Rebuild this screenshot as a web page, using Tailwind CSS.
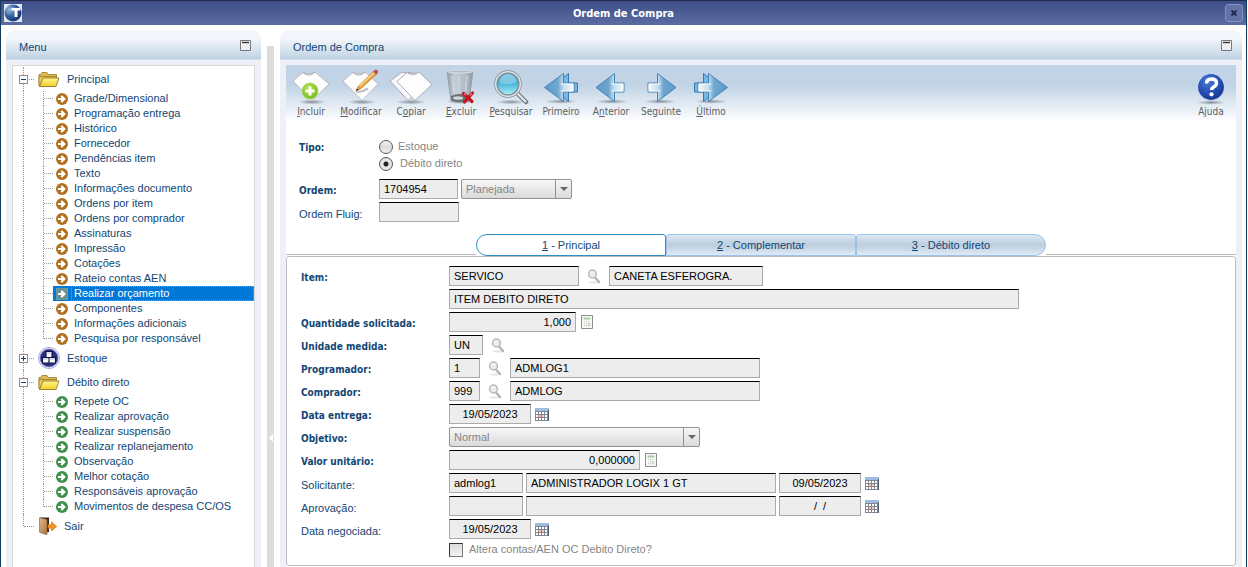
<!DOCTYPE html>
<html lang="pt-BR">
<head>
    <meta charset="UTF-8">
    <meta name="viewport" content="width=device-width, initial-scale=1.0">
    <title>Ordem de Compra</title>
    <script src="https://cdn.jsdelivr.net/npm/@tailwindcss/browser@4"></script>
</head>
<body class="min-h-screen bg-white pr-px font-['Liberation_Sans',Arial,sans-serif] text-[11px] leading-[15px] text-[#124674]">
    <!-- Shared gradients and small icons -->
    <svg class="absolute w-0 h-0" aria-hidden="true">
        <defs>
            <linearGradient id="g-arrow" x1="0" x2="1" y1="0" y2="0">
                <stop offset="0" stop-color="#5b9bcd"/><stop offset=".45" stop-color="#6fa6cf"/><stop offset=".65" stop-color="#c5dff0"/><stop offset="1" stop-color="#f8fcff"/>
            </linearGradient>
            <linearGradient id="g-folder" x1="0" x2="0" y1="0" y2="1">
                <stop offset="0" stop-color="#fff58e"/><stop offset="1" stop-color="#f2cf2a"/>
            </linearGradient>
            <linearGradient id="g-glass" x1="0" x2="0" y1="0" y2="1">
                <stop offset="0" stop-color="#5fb4d8"/><stop offset=".45" stop-color="#3fb3d8"/><stop offset="1" stop-color="#b5f3fb"/>
            </linearGradient>
            <linearGradient id="g-bin" x1="0" x2="1" y1="0" y2="0">
                <stop offset="0" stop-color="#8b959c"/><stop offset=".3" stop-color="#c4ced6"/><stop offset=".75" stop-color="#aab5bd"/><stop offset="1" stop-color="#858e95"/>
            </linearGradient>
            <linearGradient id="g-door" x1="0" x2="1" y1="0" y2="1">
                <stop offset="0" stop-color="#e0b988"/><stop offset="1" stop-color="#a8743e"/>
            </linearGradient>
            <radialGradient id="g-help" cx=".4" cy=".3" r=".8">
                <stop offset="0" stop-color="#4d78d6"/><stop offset=".6" stop-color="#2149ad"/><stop offset="1" stop-color="#142f80"/>
            </radialGradient>
            <radialGradient id="g-globe" cx=".3" cy=".3" r=".8">
                <stop offset="0" stop-color="#9dbbe0"/><stop offset=".5" stop-color="#335f9f"/><stop offset="1" stop-color="#0d2b63"/>
            </radialGradient>
            <radialGradient id="g-plus" cx=".4" cy=".3" r=".8">
                <stop offset="0" stop-color="#b5e552"/><stop offset="1" stop-color="#6fb81d"/>
            </radialGradient>
            <radialGradient id="g-shadow">
                <stop offset="0" stop-color="#4a5560" stop-opacity=".6"/><stop offset="1" stop-color="#4a5560" stop-opacity="0"/>
            </radialGradient>
        </defs>
        <symbol id="i-go" viewBox="0 0 12 12">
            <circle cx="6" cy="6" r="6" fill="currentColor"/>
            <path d="M2 5h3.600L4.600 3.600 6 2.300 9.900 6 6 9.700 4.600 8.400 5.600 7H2z" fill="#fff"/>
        </symbol>
        <symbol id="i-folder" viewBox="0 0 22 17">
            <path d="M1 14V3.500h2L4 1.500h5l1 2h8.500V7" fill="#dfb951" stroke="#9a7b2c" stroke-width=".8"/>
            <path d="M1 15V5.500l4 0h13.500v3l-3 6.500z" fill="#e9c85c" stroke="#9a7b2c" stroke-width=".8"/>
            <path d="M1.500 15.500l3.500-8.500h16l-3 8.500z" fill="url(#g-folder)" stroke="#8a6d20" stroke-width=".8"/>
        </symbol>
        <symbol id="i-stock" viewBox="0 0 22 22">
            <circle cx="11" cy="11" r="10.500" fill="#fff" stroke="#a3a5de"/>
            <circle cx="11" cy="11" r="9" fill="#2b2f86" stroke="#7578c4" stroke-width=".8"/>
            <path d="M8 4.500h6v6H8zM4.500 10.500h6.500v5.500h-6.500zM11 10.500h6.500v5.500H11z" fill="#fff" stroke="#101340" stroke-width="1.200"/>
            <path d="M8.600 6h4.800M5.200 12h5.200M11.700 12h5.200" stroke="#b4b6de" stroke-width=".9"/>
        </symbol>
        <symbol id="i-exit" viewBox="0 0 19 18">
            <path d="M0 15.500l7 2.300 5-2z" fill="#bbb"/>
            <path d="M2 .5h9v14.500h-9z" fill="#33261c"/>
            <path d="M1.500 .7l7.500 1.800v15l-7.500-2.500z" fill="url(#g-door)" stroke="#8a6136" stroke-width=".6"/>
            <path d="M10 7.700h3.500V4.800L18.700 9.500l-5.200 4.500v-2.800H10z" fill="#f39226" stroke="#c66b10" stroke-width=".6"/>
        </symbol>
        <symbol id="i-find" viewBox="0 0 14 15">
            <ellipse cx="7" cy="13.500" rx="6" ry="1.200" fill="#e6e6e6"/>
            <path d="M7.500 8l4.500 5" stroke="#b4b4b4" stroke-width="2.400" stroke-linecap="round"/>
            <circle cx="5.500" cy="5" r="3.900" fill="#ececec" stroke="#b9b9b9" stroke-width="1.500"/>
            <path d="M3.800 4.800a2 2 0 0 1 2-1.600" fill="none" stroke="#fff"/>
        </symbol>
        <symbol id="i-calc" viewBox="0 0 12 14">
            <path d="M.5 .5h11v13H.5z" fill="#f7f9f6" stroke="#8d8d8d"/>
            <path d="M2.500 2.500h7v2h-7z" fill="#a9cfa4"/>
            <path d="M3 6.500h6M3 8.500h6M3 10.500h6" stroke="#c4ccc4" stroke-dasharray="1 1"/>
            <path d="M6.500 8h3v3.500h-3z" fill="#d5dbd3"/>
        </symbol>
        <symbol id="i-cal" viewBox="0 0 14 13">
            <path d="M0 0h14v13H0z" fill="#7d8791"/>
            <path d="M0 0h14v3H0z" fill="#9fbce0"/>
            <path d="M1 4h2v2H1zM4 4h2v2H4zM7 4h2v2H7zM10 4h2v2h-2zM1 7h2v2H1zM10 7h2v2h-2zM1 10h2v2H1zM4 10h2v2H4zM7 10h2v2H7zM10 10h2v2h-2z" fill="#fff"/>
            <path d="M4 7h2v2H4zM7 7h2v2H7z" fill="#f9c9c4"/>
            <path d="M3.500 9.500h3M6.500 6.500v3" stroke="#d8605a"/>
            <path d="M13.500 2v11" stroke="#56606c"/>
        </symbol>
        <symbol id="i-prev" viewBox="0 0 36 36">
            <ellipse cx="19" cy="32.500" rx="16" ry="2.300" fill="url(#g-shadow)"/>
            <path d="M3 18.500L21.500 4.500v9.500h9.500v9h-9.500v9.500z" fill="url(#g-arrow)" stroke="#4684b6"/>
            <path d="M18 15h12v7H18" fill="none" stroke="#fff" stroke-opacity=".8"/>
        </symbol>
        <symbol id="i-first" viewBox="0 0 36 36">
            <ellipse cx="18" cy="32.500" rx="16" ry="2.300" fill="url(#g-shadow)"/>
            <path d="M8 18.500L25.500 4.500v9.500h9v9h-9v9.500z" fill="#79b7e4" stroke="#3478b0"/>
            <path d="M1.500 18.500L20.500 4.500v9.500h10.500v9h-10.500v9.500z" fill="url(#g-arrow)" stroke="#4684b6"/>
            <path d="M17.500 15h12.500v7h-12.500" fill="none" stroke="#fff" stroke-opacity=".8"/>
        </symbol>
        <symbol id="i-minimize" viewBox="0 0 11 11">
            <path d="M.5 .5h10v10H.5z" fill="#eef0f2" stroke="#77797c"/>
            <path d="M2 2.500h7" stroke="#333" stroke-width="1.400"/>
        </symbol>
    </svg>

    <div class="flex min-h-screen flex-col border-x border-[#123a5c]">
        <!-- Title bar -->
        <header class="flex h-[25px] items-center justify-between border-t border-[#23294a] bg-linear-to-b from-[#3d4d88] to-[#5d6ca1] px-[3px]">
            <svg class="h-[18px] w-[18px]" viewBox="0 0 18 18">
                <path d="M0 0h18v18H0z" fill="#dfe8f4"/>
                <circle cx="9" cy="9" r="8.500" fill="url(#g-globe)"/>
                <path d="M7.500 4h9v2.500h-3V13h-3V6.500h-3z" fill="#fff"/>
            </svg>
            <h1 class="font-['DejaVu_Sans_Condensed','DejaVu_Sans',sans-serif] text-[11px] font-bold text-white">Ordem de Compra</h1>
            <button aria-label="Fechar" class="flex h-[18px] w-[18px] items-center justify-center rounded-[3px] border border-[#8492c0] bg-[#6373a8]">
                <svg class="h-[6px] w-[6px]" viewBox="0 0 6 6"><path d="M.5 .5l5 5M5.500 .5l-5 5" stroke="#1b2347" stroke-width="1.800"/></svg>
            </button>
        </header>

        <main class="flex grow gap-[6px] pt-[5px] pr-1 pl-[5px]">
            <!-- Menu panel -->
            <aside class="flex w-[255px] shrink-0 flex-col rounded-t-[10px] bg-[#edf1f7]">
                <div class="flex h-[30px] items-center justify-between rounded-t-[10px] border-b border-[#d3dfea] bg-linear-to-b from-[#f3f6fa] from-30% to-[#bfd3e4] pt-[5px] pr-[10px] pl-[13px]">
                    <h2>Menu</h2>
                    <button aria-label="Minimizar menu" class="mb-1"><svg class="h-[11px] w-[11px]"><use href="#i-minimize"/></svg></button>
                </div>
                <nav class="mx-[6px] mt-[5px] grow border border-b-0 border-[#d8d8d8] bg-white">
                    <ul id="tree" class="pt-px"></ul>
                </nav>
            </aside>

            <!-- Splitter -->
            <div class="mt-[16px] flex w-[7px] shrink-0 items-center justify-center bg-[#dcdcdc] pt-[262px]">
                <svg class="h-[8px] w-[4px]" viewBox="0 0 4 8"><path d="M4 0v8L0 4z" fill="#fff"/></svg>
            </div>

            <!-- Purchase order panel -->
            <section class="flex grow flex-col rounded-t-[10px] bg-[#edf1f7]">
                <div class="flex h-[30px] items-center justify-between rounded-t-[10px] border-b border-[#d3dfea] bg-linear-to-b from-[#f3f6fa] from-30% to-[#bfd3e4] pt-[5px] pr-[10px] pl-[13px]">
                    <h2>Ordem de Compra</h2>
                    <button aria-label="Minimizar painel" class="mb-1"><svg class="h-[11px] w-[11px]"><use href="#i-minimize"/></svg></button>
                </div>

                <div class="mx-[6px] mt-[5px] flex grow flex-col bg-white">
                    <!-- Toolbar -->
                    <div class="flex h-[57px] bg-linear-to-b from-[#c1d3e5] from-35% to-white pt-1 font-['DejaVu_Sans_Condensed','DejaVu_Sans',sans-serif] text-[10px] leading-[13px] text-[#5c6066]">
                        <button class="flex w-[50px] flex-col items-center">
                            <svg class="h-[36px] w-[40px]" viewBox="0 0 40 36">
                                <ellipse cx="21" cy="33" rx="14" ry="2.500" fill="url(#g-shadow)"/>
                                <path d="M2 12l10-8.500q6 3 12-.5L38 15 21 31.500z" fill="#fdfdfe" stroke="#b3b3bb" stroke-width=".8"/>
                                <path d="M12 3.500q6 5.500 12-.5" fill="none" stroke="#9b9ba3" stroke-width=".8"/>
                                <circle cx="19" cy="22" r="8" fill="url(#g-plus)" stroke="#a5d84d" stroke-width=".7"/>
                                <path d="M19 17.500v9M14.500 22h9" stroke="#fff" stroke-width="3"/>
                            </svg>
                            <span><u>I</u>ncluir</span>
                        </button>
                        <button class="flex w-[50px] flex-col items-center">
                            <svg class="h-[36px] w-[40px]" viewBox="0 0 40 36">
                                <ellipse cx="21" cy="33" rx="14" ry="2.500" fill="url(#g-shadow)"/>
                                <path d="M2 12l10-8.500q6 3 12-.5L37 15 21 31.500z" fill="#fdfdfe" stroke="#b3b3bb" stroke-width=".8"/>
                                <path d="M12 3.500q6 5.500 12-.5" fill="none" stroke="#9b9ba3" stroke-width=".8"/>
                                <path d="M15 22.500q6 1 12-3" stroke="#c4c4c8" stroke-width="2.500" fill="none"/>
                                <path d="M15 22l2.500-5L32.500 2.500l3 2.500L20.500 19z" fill="#eca63a" stroke="#a86b1d" stroke-width=".7"/>
                                <path d="M18 16.800L32.500 3l1 1L19 17.800z" fill="#fbdc8b"/>
                                <path d="M32.500 2.500q2.500-2.500 4 -.8 1 1.600-1 3.300z" fill="#c9504e" stroke="#8a4140" stroke-width=".6"/>
                                <path d="M15 22l1-2.500 1.500 1.200z" fill="#333"/>
                            </svg>
                            <span><u>M</u>odificar</span>
                        </button>
                        <button class="flex w-[50px] flex-col items-center">
                            <svg class="h-[36px] w-[44px]" viewBox="0 0 44 36">
                                <ellipse cx="22" cy="33" rx="15" ry="2.500" fill="url(#g-shadow)"/>
                                <path d="M1 12l12-9q6 2.500 10 0L36 15 19 31.500z" fill="#f8f8fa" stroke="#9b9ba3" stroke-width=".8"/>
                                <path d="M8 12.500L18 3.500q6 3 12-.5L43 15.500 26 31.500z" fill="#fdfdfe" stroke="#9b9ba3" stroke-width=".8"/>
                                <path d="M18 3.500q6 5.500 12-.5" fill="none" stroke="#b8b8c0" stroke-width=".8"/>
                            </svg>
                            <span>C<u>o</u>piar</span>
                        </button>
                        <button class="flex w-[50px] flex-col items-center">
                            <svg class="h-[36px] w-[32px]" viewBox="0 0 32 36">
                                <ellipse cx="15" cy="32.500" rx="13" ry="2.500" fill="url(#g-shadow)"/>
                                <path d="M2 2h26l-4 30q-9 2.500-18 0z" fill="url(#g-bin)" fill-opacity=".85" stroke="#8e979e" stroke-width=".8"/>
                                <ellipse cx="15" cy="2.500" rx="13" ry="1.500" fill="#b4bec6" stroke="#dfe7ed" stroke-width=".8"/>
                                <path d="M7 7l2 17M14 7v17M22 7l-1.500 15" stroke="#d9e1e7" stroke-opacity=".6" stroke-width="1.500"/>
                                <path d="M6 27q9-4 18 0l-.5 4.500q-8.500 3-17 0z" fill="#6b7074"/>
                                <ellipse cx="13" cy="29" rx="5" ry="1.800" fill="#d3d7da"/>
                                <path d="M18.500 24.500l8.500 8M27.500 24l-8 9" stroke="#c41420" stroke-width="3.200" stroke-linecap="round"/>
                                <path d="M19 24.500l2 1.500M27 24.500l-2 2" stroke="#f07d7d" stroke-width="1.200"/>
                            </svg>
                            <span><u>E</u>xcluir</span>
                        </button>
                        <button class="flex w-[50px] flex-col items-center">
                            <svg class="h-[36px] w-[36px]" viewBox="0 0 36 36">
                                <ellipse cx="18" cy="33" rx="15" ry="2.300" fill="url(#g-shadow)"/>
                                <path d="M24 24l9 9" stroke="#6f787f" stroke-width="4.500" stroke-linecap="round"/>
                                <path d="M23.500 23.500l9 9" stroke="#e4e8eb" stroke-width="2.200" stroke-linecap="round"/>
                                <circle cx="15" cy="15" r="12" fill="url(#g-glass)" stroke="#7f8b94" stroke-width="3.400"/>
                                <circle cx="15" cy="15" r="12.300" fill="none" stroke="#dfe5e9" stroke-width="1.500"/>
                                <path d="M6.500 14a8.500 8.500 0 0 1 17-1q-8 4-17 1z" fill="#fff" fill-opacity=".3"/>
                            </svg>
                            <span><u>P</u>esquisar</span>
                        </button>
                        <button class="flex w-[50px] flex-col items-center">
                            <svg class="h-[36px] w-[36px]"><use href="#i-first"/></svg>
                            <span>Primeiro</span>
                        </button>
                        <button class="flex w-[50px] flex-col items-center">
                            <svg class="h-[36px] w-[36px]"><use href="#i-prev"/></svg>
                            <span>A<u>n</u>terior</span>
                        </button>
                        <button class="flex w-[50px] flex-col items-center">
                            <svg class="h-[36px] w-[36px] -scale-x-100"><use href="#i-prev"/></svg>
                            <span>Se<u>g</u>uinte</span>
                        </button>
                        <button class="flex w-[50px] flex-col items-center">
                            <svg class="h-[36px] w-[36px] -scale-x-100"><use href="#i-first"/></svg>
                            <span><u>Ú</u>ltimo</span>
                        </button>
                        <button class="ml-auto flex w-[50px] flex-col items-center">
                            <svg class="h-[36px] w-[32px]" viewBox="0 0 32 36">
                                <ellipse cx="16" cy="33.500" rx="14" ry="2.300" fill="url(#g-shadow)"/>
                                <circle cx="16" cy="18" r="13.500" fill="url(#g-help)" stroke="#c9d6f0" stroke-width="1.200"/>
                                <path d="M11.500 14.500q0-4.500 5-4.500t5 4q0 2.300-2.500 3.700-2.300 1.300-2.300 3.300" fill="none" stroke="#fff" stroke-width="3.400"/>
                                <circle cx="16.500" cy="25.300" r="2.100" fill="#fff"/>
                            </svg>
                            <span>Ajuda</span>
                        </button>
                    </div>

                    <!-- Order header -->
                    <form class="flex flex-col gap-[3px] pt-4 pl-[13px]">
                        <fieldset class="mb-1 flex">
                            <legend class="float-left w-[80px] pt-[2px] font-['DejaVu_Sans_Condensed','DejaVu_Sans',sans-serif] text-[10px] font-bold">Tipo:</legend>
                            <div class="text-[#858585]">
                                <label class="flex h-[17px] items-center gap-[5px]"><input type="radio" name="tipo" disabled class="h-[14px] w-[14px] appearance-none rounded-full border border-[#555] bg-linear-to-b from-[#f4f4f4] via-[#dcdcdc] to-[#f4f4f4]">Estoque</label>
                                <label class="flex h-[17px] items-center gap-[7px]"><input type="radio" name="tipo" checked disabled class="h-[14px] w-[14px] appearance-none rounded-full border border-[#555] bg-[radial-gradient(circle,#222_0_2px,#e6e6e6_3px)]">Débito direto</label>
                            </div>
                        </fieldset>
                        <div class="flex gap-[3px]">
                            <label for="ordem" class="w-[77px] pt-1 font-['DejaVu_Sans_Condensed','DejaVu_Sans',sans-serif] text-[10px] font-bold">Ordem:</label>
                            <input id="ordem" value="1704954" readonly class="h-[20px] w-[79px] border border-[#aaa] border-t-black bg-[#ededed] px-1 text-black">
                            <div class="relative h-[20px] w-[111px]">
                                <select aria-label="Situação" disabled class="h-full w-full appearance-none rounded-[2px] border border-[#929292] bg-linear-to-b from-[#f8f8f8] to-[#dadada] px-1 text-[#858585]"><option>Planejada</option></select>
                                <span class="pointer-events-none absolute inset-y-0 right-0 flex w-[17px] items-center justify-center border-l border-[#929292]"><svg class="h-[4px] w-[8px]" viewBox="0 0 8 4"><path d="M0 0h8L4 4z" fill="#666"/></svg></span>
                            </div>
                        </div>
                        <div class="flex">
                            <label for="fluig" class="w-[80px] pt-[5px]">Ordem Fluig:</label>
                            <input id="fluig" readonly class="h-[20px] w-[80px] border border-[#aaa] border-t-black bg-[#ededed] px-1 text-black">
                        </div>
                    </form>

                    <!-- Tabs -->
                    <div class="mt-3 flex h-[22px]" role="tablist">
                        <span class="mb-px grow border-b border-[#bbb]"></span>
                        <button role="tab" aria-selected="true" class="w-[190px] rounded-l-[11px] rounded-tr-[3px] border border-[#2b8fc6] bg-white pt-px"><u>1</u> - Principal</button>
                        <button role="tab" class="w-[190px] rounded-t-[3px] border border-[#9cc4ea] bg-linear-to-b from-[#dde8f3] via-[#bccddd] to-[#dfeaf6] pt-px"><u>2</u> - Complementar</button>
                        <button role="tab" class="w-[190px] rounded-r-[11px] rounded-tl-[3px] border border-[#9cc4ea] bg-linear-to-b from-[#dde8f3] via-[#bccddd] to-[#dfeaf6] pt-px"><u>3</u> - Débito direto</button>
                        <span class="mb-px grow border-b border-[#bbb]"></span>
                    </div>

                    <!-- Item data -->
                    <form class="mb-[2px] flex grow flex-col gap-[3px] rounded-[3px] border border-[#bdbdc2] px-[14px] pt-[9px] pb-[8px]">
                        <div class="flex">
                            <label for="item" class="w-[148px] pt-1 font-['DejaVu_Sans_Condensed','DejaVu_Sans',sans-serif] text-[10px] font-bold">Item:</label>
                            <input id="item" value="SERVICO" readonly class="h-[20px] w-[130px] border border-[#aaa] border-t-black bg-[#ededed] px-1 text-black">
                            <button type="button" aria-label="Pesquisar item" class="px-2"><svg class="h-[15px] w-[14px]"><use href="#i-find"/></svg></button>
                            <input aria-label="Descrição do item" value="CANETA ESFEROGRA." readonly class="h-[20px] w-[154px] border border-[#aaa] border-t-black bg-[#ededed] px-1 text-black">
                        </div>
                        <div class="flex pl-[148px]">
                            <input aria-label="Descrição complementar" value="ITEM DEBITO DIRETO" readonly class="h-[20px] w-[570px] border border-[#aaa] border-t-black bg-[#ededed] px-1 text-black">
                        </div>
                        <div class="flex">
                            <label for="quantidade" class="w-[148px] pt-1 font-['DejaVu_Sans_Condensed','DejaVu_Sans',sans-serif] text-[10px] font-bold">Quantidade solicitada:</label>
                            <input id="quantidade" value="1,000" readonly class="h-[20px] w-[127px] border border-[#aaa] border-t-black bg-[#ededed] px-1 text-right text-black">
                            <button type="button" aria-label="Calculadora" class="px-[5px]"><svg class="h-[14px] w-[12px]"><use href="#i-calc"/></svg></button>
                        </div>
                        <div class="flex">
                            <label for="unidade" class="w-[148px] pt-1 font-['DejaVu_Sans_Condensed','DejaVu_Sans',sans-serif] text-[10px] font-bold">Unidade medida:</label>
                            <input id="unidade" value="UN" readonly class="h-[20px] w-[34px] border border-[#aaa] border-t-black bg-[#ededed] px-1 text-black">
                            <button type="button" aria-label="Pesquisar unidade" class="px-2"><svg class="h-[15px] w-[14px]"><use href="#i-find"/></svg></button>
                        </div>
                        <div class="flex">
                            <label for="programador" class="w-[148px] pt-1 font-['DejaVu_Sans_Condensed','DejaVu_Sans',sans-serif] text-[10px] font-bold">Programador:</label>
                            <input id="programador" value="1" readonly class="h-[20px] w-[31px] border border-[#aaa] border-t-black bg-[#ededed] px-1 text-black">
                            <button type="button" aria-label="Pesquisar programador" class="px-2"><svg class="h-[15px] w-[14px]"><use href="#i-find"/></svg></button>
                            <input aria-label="Nome do programador" value="ADMLOG1" readonly class="h-[20px] w-[250px] border border-[#aaa] border-t-black bg-[#ededed] px-1 text-black">
                        </div>
                        <div class="flex">
                            <label for="comprador" class="w-[148px] pt-1 font-['DejaVu_Sans_Condensed','DejaVu_Sans',sans-serif] text-[10px] font-bold">Comprador:</label>
                            <input id="comprador" value="999" readonly class="h-[20px] w-[31px] border border-[#aaa] border-t-black bg-[#ededed] px-1 text-black">
                            <button type="button" aria-label="Pesquisar comprador" class="px-2"><svg class="h-[15px] w-[14px]"><use href="#i-find"/></svg></button>
                            <input aria-label="Nome do comprador" value="ADMLOG" readonly class="h-[20px] w-[250px] border border-[#aaa] border-t-black bg-[#ededed] px-1 text-black">
                        </div>
                        <div class="flex">
                            <label for="entrega" class="w-[148px] pt-1 font-['DejaVu_Sans_Condensed','DejaVu_Sans',sans-serif] text-[10px] font-bold">Data entrega:</label>
                            <input id="entrega" value="19/05/2023" readonly class="h-[20px] w-[82px] border border-[#aaa] border-t-black bg-[#ededed] px-1 text-center text-black">
                            <button type="button" aria-label="Calendário" class="px-1"><svg class="h-[13px] w-[14px]"><use href="#i-cal"/></svg></button>
                        </div>
                        <div class="flex">
                            <label for="objetivo" class="w-[148px] pt-1 font-['DejaVu_Sans_Condensed','DejaVu_Sans',sans-serif] text-[10px] font-bold">Objetivo:</label>
                            <div class="relative h-[20px] w-[251px]">
                                <select id="objetivo" disabled class="h-full w-full appearance-none rounded-[2px] border border-[#929292] bg-linear-to-b from-[#f8f8f8] to-[#dadada] px-1 text-[#858585]"><option>Normal</option></select>
                                <span class="pointer-events-none absolute inset-y-0 right-0 flex w-[17px] items-center justify-center border-l border-[#929292]"><svg class="h-[4px] w-[8px]" viewBox="0 0 8 4"><path d="M0 0h8L4 4z" fill="#666"/></svg></span>
                            </div>
                        </div>
                        <div class="flex">
                            <label for="valor" class="w-[148px] pt-1 font-['DejaVu_Sans_Condensed','DejaVu_Sans',sans-serif] text-[10px] font-bold">Valor unitário:</label>
                            <input id="valor" value="0,000000" readonly class="h-[20px] w-[191px] border border-[#aaa] border-t-black bg-[#ededed] px-1 text-right text-black">
                            <button type="button" aria-label="Calculadora" class="px-[5px]"><svg class="h-[14px] w-[12px]"><use href="#i-calc"/></svg></button>
                        </div>
                        <div class="flex gap-[3px]">
                            <label for="solicitante" class="w-[145px] pt-[5px]">Solicitante:</label>
                            <input id="solicitante" value="admlog1" readonly class="h-[20px] w-[74px] border border-[#aaa] border-t-black bg-[#ededed] px-1 text-black">
                            <input aria-label="Nome do solicitante" value="ADMINISTRADOR LOGIX 1 GT" readonly class="h-[20px] w-[250px] border border-[#aaa] border-t-black bg-[#ededed] px-1 text-black">
                            <input aria-label="Data da solicitação" value="09/05/2023" readonly class="h-[20px] w-[82px] border border-[#aaa] border-t-black bg-[#ededed] px-1 text-center text-black">
                            <button type="button" aria-label="Calendário" class="px-px"><svg class="h-[13px] w-[14px]"><use href="#i-cal"/></svg></button>
                        </div>
                        <div class="flex gap-[3px]">
                            <label for="aprovacao" class="w-[145px] pt-[5px]">Aprovação:</label>
                            <input id="aprovacao" readonly class="h-[20px] w-[74px] border border-[#aaa] border-t-black bg-[#ededed] px-1 text-black">
                            <input aria-label="Nome do aprovador" readonly class="h-[20px] w-[250px] border border-[#aaa] border-t-black bg-[#ededed] px-1 text-black">
                            <input aria-label="Data da aprovação" value="/  /" readonly class="h-[20px] w-[82px] border border-[#aaa] border-t-black bg-[#ededed] px-1 text-center text-black">
                            <button type="button" aria-label="Calendário" class="px-px"><svg class="h-[13px] w-[14px]"><use href="#i-cal"/></svg></button>
                        </div>
                        <div class="flex">
                            <label for="negociada" class="w-[148px] pt-[5px]">Data negociada:</label>
                            <input id="negociada" value="19/05/2023" readonly class="h-[20px] w-[82px] border border-[#aaa] border-t-black bg-[#ededed] px-1 text-center text-black">
                            <button type="button" aria-label="Calendário" class="px-1"><svg class="h-[13px] w-[14px]"><use href="#i-cal"/></svg></button>
                        </div>
                        <label class="ml-[148px] flex items-center gap-[6px] text-[#858585]">
                            <input type="checkbox" disabled class="h-[14px] w-[14px] appearance-none border border-[#777] border-t-[#333] border-l-[#333] bg-linear-to-b from-[#dcdcdc] to-[#f2f2f2]">
                            Altera contas/AEN OC Debito Direto?
                        </label>
                    </form>
                </div>
            </section>
        </main>
    </div>

    <script>
        const menu = [
            {
                name: "Principal", icon: "folder", open: true, color: "text-[#b0701f]",
                items: ["Grade/Dimensional", "Programação entrega", "Histórico", "Fornecedor", "Pendências item", "Texto",
                    "Informações documento", "Ordens por item", "Ordens por comprador", "Assinaturas", "Impressão", "Cotações",
                    "Rateio contas AEN", "Realizar orçamento", "Componentes", "Informações adicionais", "Pesquisa por responsável"]
            },
            { name: "Estoque", icon: "stock", open: false, items: [] },
            {
                name: "Débito direto", icon: "folder", open: true, color: "text-[#3f8f4b]",
                items: ["Repete OC", "Realizar aprovação", "Realizar suspensão", "Realizar replanejamento", "Observação",
                    "Melhor cotação", "Responsáveis aprovação", "Movimentos de despesa CC/OS"]
            },
            { name: "Sair", icon: "exit", items: [] }
        ];
        const selected = "Realizar orçamento";

        const icons = {
            folder: '<svg class="ml-1 h-[17px] w-[22px]"><use href="#i-folder"/></svg>',
            stock: '<svg class="ml-1 h-[22px] w-[22px]"><use href="#i-stock"/></svg>',
            exit: '<svg class="ml-1 h-[18px] w-[19px]"><use href="#i-exit"/></svg>'
        };

        function childRow(name, color, last) {
            const on = name === selected;
            return `
                <li class="flex h-[15px] items-center">
                    <span class="h-full w-[11px] border-r border-dotted border-[#999]"></span>
                    <span class="${last ? "h-1/2 self-start" : "h-full"} w-[20px] border-r border-dotted border-[#999]"></span>
                    <span class="w-[9px] border-t border-dotted border-[#999]"></span>
                    <a href="#" class="flex h-full grow items-center gap-[3px] pl-[3px] ${on ? "bg-[#0078d7] text-white" : ""}">
                        <svg class="h-[12px] w-[12px] ${on ? "bg-[#5f9fb8] text-[#6f8f8c]" : color}"><use href="#i-go"/></svg>
                        <span class="flex h-full grow items-center border border-dotted pl-[2px] ${on ? "border-[#d98b3a]" : "border-transparent"}">${name}</span>
                    </a>
                </li>`;
        }

        function groupRow(group, last) {
            // the toggle box sits over the vertical tree line
            const toggle = group.open === undefined ? "" : `
                <button aria-label="${group.open ? "Recolher" : "Expandir"} ${group.name}" class="absolute top-[8px] left-[6px] h-[9px] w-[9px] border border-[#8c8c8c] bg-white">
                    <svg class="h-[7px] w-[7px]" viewBox="0 0 7 7"><path d="${group.open ? "M1 3.5h5" : "M1 3.5h5M3.5 1v5"}" stroke="#124674"/></svg>
                </button>`;
            return `
                <li class="relative flex h-[24px] items-center">
                    <span class="${last ? "h-1/2 self-start" : "h-full"} w-[11px] border-r border-dotted border-[#999]"></span>
                    <span class="w-[10px] border-t border-dotted border-[#999]"></span>
                    ${toggle}
                    <a href="#" class="flex items-center gap-[7px]">${icons[group.icon]}${group.name}</a>
                </li>`;
        }

        document.getElementById("tree").innerHTML = menu.map((group, g) =>
            groupRow(group, g === menu.length - 1) +
            group.items.map((name, i) => childRow(name, group.color, i === group.items.length - 1)).join("")
        ).join("");
    </script>
</body>
</html>
